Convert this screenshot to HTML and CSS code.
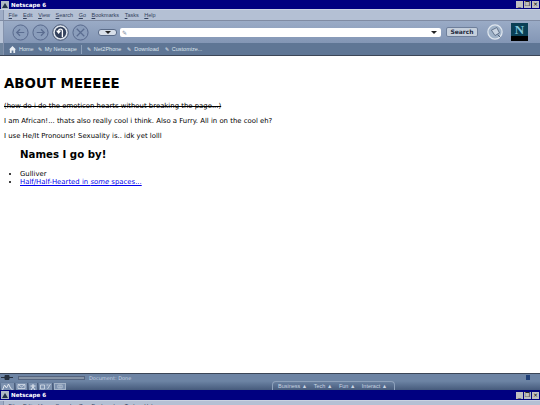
FILE: index.html
```html
<!DOCTYPE html>
<html lang="en">
  <head>
    <meta charset="UTF-8" />
    <title>Netscape 6</title>
    <link rel="stylesheet" href="styles.css">
  </head>
  <body>
    <div class="window">
      <div class="title-bar">
        <svg class="app-icon" viewBox="0 0 8 8"><rect width="8" height="8" fill="#aeb8c4"/><path d="M1 7 4 2l3 5z" fill="#203048"/></svg>
        <span class="title-text">Netscape 6</span>
        <div class="win-btns">
          <span class="win-btn">_</span>
          <span class="win-btn">&#10064;</span>
          <span class="win-btn">&times;</span>
        </div>
      </div>

      <div class="menu-bar">
        <span class="grip"></span>
        <span><u>F</u>ile</span>
        <span><u>E</u>dit</span>
        <span><u>V</u>iew</span>
        <span><u>S</u>earch</span>
        <span><u>G</u>o</span>
        <span><u>B</u>ookmarks</span>
        <span><u>T</u>asks</span>
        <span><u>H</u>elp</span>
      </div>

      <div class="nav-bar">
        <span class="grip"></span>
        <div class="nav-btns">
          <svg class="nav-btn" viewBox="0 0 18 18"><circle cx="9" cy="9" r="8" fill="#8a9dbb" stroke="#55668a"/><path d="M13 9H5M8.500 5.500 5 9l3.500 3.500" fill="none" stroke="#5a6c90" stroke-width="1.300"/></svg>
          <svg class="nav-btn" viewBox="0 0 18 18"><circle cx="9" cy="9" r="8" fill="#8a9dbb" stroke="#55668a"/><path d="M5 9h8M9.500 5.500 13 9l-3.500 3.500" fill="none" stroke="#5a6c90" stroke-width="1.300"/></svg>
          <svg class="nav-btn" viewBox="0 0 18 18"><circle cx="9" cy="9" r="8.200" fill="#dfe6ee" stroke="#3b4a68"/><circle cx="9" cy="9" r="6" fill="#33415c"/><path d="M11 14V7.500a2 2 0 0 0-4 0V9M5 7l2 2.500L9 7" fill="none" stroke="#fff" stroke-width="1.400"/></svg>
          <svg class="nav-btn" viewBox="0 0 18 18"><circle cx="9" cy="9" r="8" fill="#8a9dbb" stroke="#55668a"/><path d="m5 5 8 8M13 5l-8 8" stroke="#5a6c90" stroke-width="1.300"/></svg>
        </div>
        <div class="url-group">
          <span class="drop-pill"><i class="arrow"></i></span>
          <div class="url-box">
            <span class="bookmark-mark">&#9998;</span>
            <i class="arrow url-arrow"></i>
          </div>
          <span class="search-btn">Search</span>
        </div>
        <svg class="globe" viewBox="0 0 18 18"><circle cx="9" cy="9" r="8" fill="#9fb2c8" stroke="#dfe6ee" stroke-width="1.400"/><path d="M5 7l6-3 3 6-5 3z" fill="#c9d4e2" stroke="#45566f" stroke-width=".8"/><path d="m12 12 3 3" stroke="#45566f"/></svg>
        <div class="n-logo"><span>N</span></div>
      </div>

      <div class="personal-bar">
        <span class="grip"></span>
        <span class="link home"><svg class="home-icon" viewBox="0 0 8 8"><path d="M0 4 4 0l4 4H7v4H5V5H3v3H1V4z" fill="#e8edf3"/></svg>Home</span>
        <span class="link"><i class="tick">&#9998;</i>My Netscape</span>
        <span class="divider"></span>
        <span class="link"><i class="tick">&#9998;</i>Net2Phone</span>
        <span class="link"><i class="tick">&#9998;</i>Download</span>
        <span class="link"><i class="tick">&#9998;</i>Customize...</span>
      </div>

      <main class="content">
        <h1>ABOUT MEEEEE</h1>
        <p><s>(how do i do the emoticon hearts without breaking the page...)</s></p>
        <p>I am African!... thats also really cool i think. Also a Furry. All in on the cool eh?</p>
        <p>I use He/It Pronouns! Sexuality is.. idk yet lolll</p>
        <h2>Names I go by!</h2>
        <ul>
          <li>Gulliver</li>
          <li><a href="#">Half/Half-Hearted in <em>some</em> spaces...</a></li>
        </ul>
      </main>

      <div class="status-bar">
        <svg class="plug" viewBox="0 0 12 5"><path d="M0 2.500h12M4 .5h4v4H4z" stroke="#26303f" fill="#26303f"/></svg>
        <span class="progress"></span>
        <span class="status-text">Document: Done</span>
        <span class="lock"></span>
      </div>

      <div class="component-bar">
        <div class="tool-icons">
          <svg class="tool-icon wide" viewBox="0 0 12 7"><path d="M1 7 3 2l2 3 2-4 2 4 2 2" fill="none" stroke="#e2e8f0"/></svg>
          <svg class="tool-icon" viewBox="0 0 10 7"><path d="M1.500 1.500h7v4h-7zM1.500 1.500 5 4l3.500-2.500" fill="none" stroke="#d5dde8" stroke-width=".8"/></svg>
          <svg class="tool-icon narrow" viewBox="0 0 7 7"><path d="M3.500 1v3M1 3h5M3.500 4 1.500 7M3.500 4l2 3" fill="none" stroke="#e2e8f0"/></svg>
          <svg class="tool-icon wide" viewBox="0 0 12 7"><path d="M1 2h4v4H1zM8 6l3-5M7 2h2" fill="none" stroke="#d5dde8" stroke-width=".8"/></svg>
          <svg class="tool-icon boxed" viewBox="0 0 10 7"><path d="M2 1.500h6v4H2zM5 1.500v4" fill="none" stroke="#d5dde8" stroke-width=".8"/></svg>
        </div>
        <div class="tabs">
          <span>Business &#9650;</span>
          <span>Tech &#9650;</span>
          <span>Fun &#9650;</span>
          <span>Interact &#9650;</span>
        </div>
      </div>
    </div>

    <div class="window second">
      <div class="title-bar">
        <svg class="app-icon" viewBox="0 0 8 8"><rect width="8" height="8" fill="#aeb8c4"/><path d="M1 7 4 2l3 5z" fill="#203048"/></svg>
        <span class="title-text">Netscape 6</span>
        <div class="win-btns">
          <span class="win-btn">_</span>
          <span class="win-btn">&#10064;</span>
          <span class="win-btn">&times;</span>
        </div>
      </div>
      <div class="menu-bar">
        <span class="grip"></span>
        <span><u>F</u>ile</span>
        <span><u>E</u>dit</span>
        <span><u>V</u>iew</span>
        <span><u>S</u>earch</span>
        <span><u>G</u>o</span>
        <span><u>B</u>ookmarks</span>
        <span><u>T</u>asks</span>
        <span><u>H</u>elp</span>
      </div>
    </div>
  </body>
</html>
```

FILE: styles.css
```css
* {
  box-sizing: border-box;
}

html,
body {
  margin: 0;
  height: 405px;
  overflow: hidden;
}

body {
  font-family: "DejaVu Sans", sans-serif;
  font-size: 6px;
  background: #fff;
}

.window {
  height: 390px;
  display: flex;
  flex-direction: column;
}

.window.second {
  height: 15px;
}

.title-bar {
  height: 9px;
  flex: none;
  background: #000080;
  color: #fff;
  display: flex;
  align-items: center;
  padding: 0 1px;
  gap: 2px;
}

.second .title-bar {
  height: 10px;
}

.app-icon {
  width: 8px;
  height: 8px;
}

.title-text {
  font-weight: bold;
  font-size: 5.6px;
}

.win-btns {
  margin-left: auto;
  display: flex;
  gap: 1px;
}

.win-btn {
  width: 7px;
  height: 7px;
  background: #c0c0c0;
  color: #000;
  font-size: 6px;
  line-height: 6px;
  text-align: center;
  overflow: hidden;
}

.grip {
  width: 4px;
  align-self: stretch;
  flex: none;
  background: #a9b6cc;
  border-right: 1px solid #8593ad;
}

.menu-bar {
  height: 12px;
  flex: none;
  background: #b4c0d4;
  color: #33415c;
  display: flex;
  align-items: center;
  gap: 5.6px;
  font-family: "Liberation Sans", sans-serif;
  font-size: 5.5px;
  border-top: 1px solid #c8d2e2;
  border-bottom: 1px solid #7f8ba3;
}

.menu-bar .grip {
  margin-right: -1px;
  background: #9fadc6;
}

.nav-bar {
  height: 22px;
  flex: none;
  background: linear-gradient(#9aabc6, #8396b5);
  display: flex;
  align-items: center;
}

.nav-bar .grip {
  background: #b9c5d8;
}

.nav-btns {
  display: flex;
  gap: 3px;
  margin-left: 8px;
  margin-right: 9px;
}

.nav-btn {
  width: 17px;
  height: 17px;
}

.url-group {
  flex: 1;
  display: flex;
  align-items: center;
  gap: 3px;
  min-width: 0;
}

.drop-pill {
  width: 19px;
  height: 7px;
  border-radius: 3px;
  background: #d8dfe9;
  border: 1px solid #5a6b88;
  display: flex;
  align-items: center;
  justify-content: center;
}

.arrow {
  width: 0;
  height: 0;
  border-left: 3px solid transparent;
  border-right: 3px solid transparent;
  border-top: 3px solid #222;
}

.url-box {
  flex: 1;
  height: 9px;
  background: #fff;
  border-radius: 2px;
  display: flex;
  align-items: center;
  justify-content: space-between;
  padding: 0 4px 0 2px;
}

.bookmark-mark {
  color: #7d8aa0;
  font-size: 6px;
}

.search-btn {
  width: 32px;
  height: 10px;
  margin-left: 2px;
  background: #c5cfdc;
  border: 1px solid #6e7f9b;
  border-radius: 2px;
  color: #1f2a3d;
  font-weight: bold;
  font-size: 6px;
  line-height: 8px;
  text-align: center;
}

.globe {
  width: 16px;
  height: 16px;
  margin: 0 8px 0 9px;
}

.n-logo {
  width: 17px;
  height: 18px;
  margin-right: 12px;
  background: linear-gradient(#0a3f55 0 70%, #000 70%);
  color: #7fc4d8;
  font-family: "Liberation Serif", serif;
  font-weight: bold;
  font-size: 13px;
  line-height: 14px;
  text-align: center;
}

.personal-bar {
  height: 13px;
  flex: none;
  background: #5f7695;
  color: #dbe3ec;
  display: flex;
  align-items: center;
  border-bottom: 1px solid #3c4657;
  font-family: "Liberation Sans", sans-serif;
  font-size: 5.5px;
}

.personal-bar .grip {
  background: #71869f;
  margin-right: 5px;
}

.link {
  display: flex;
  align-items: center;
  gap: 3px;
  margin-right: 6px;
}

.home {
  margin-right: 4px;
}

.home-icon {
  width: 7px;
  height: 7px;
}

.tick {
  font-style: normal;
  font-size: 5px;
  color: #e8edf3;
}

.divider {
  width: 1px;
  height: 9px;
  background: #8ea1ba;
  margin: 0 5px 0 -2px;
}

.content {
  flex: 1;
  min-height: 0;
  background: #fff;
  color: #000;
  padding: 0 4px;
  font-size: 6.9px;
  line-height: 8px;
}

.content h1 {
  font-size: 13.4px;
  line-height: 16px;
  margin: 20px 0 0;
}

.content p {
  margin: 7px 0 0;
}

.content h1 + p {
  margin-top: 10px;
}

.content h2 {
  font-size: 10.2px;
  line-height: 13px;
  margin: 8px 0 0 16px;
}

.content ul {
  margin: 9px 0 0;
  padding-left: 16px;
}

.content a {
  color: #0000ee;
}

.status-bar {
  height: 8px;
  flex: none;
  background: #6d84a4;
  border-top: 1px solid #3c4657;
  display: flex;
  align-items: center;
  color: #c9d4e2;
  font-size: 5px;
  padding-left: 1px;
}

.plug {
  width: 12px;
  height: 5px;
  margin-right: 5px;
}

.progress {
  width: 67px;
  height: 4px;
  background: #8794a6;
  border: 1px solid #556580;
  margin-right: 4px;
}

.lock {
  width: 4px;
  height: 5px;
  background: #1f3f77;
  margin-left: auto;
  margin-right: 10px;
}

.component-bar {
  height: 9px;
  flex: none;
  background: linear-gradient(#6d84a4, #465b7c);
  display: flex;
  align-items: flex-end;
  color: #c9d4e2;
  font-family: "Liberation Sans", sans-serif;
  font-size: 5.5px;
}

.tool-icons {
  display: flex;
  gap: 1px;
  padding-left: 1px;
  width: 272px;
}

.tool-icon {
  width: 12px;
  height: 7px;
  background: #7c91af;
  border-right: 1px solid #4c5f7e;
}

.tool-icon.narrow {
  width: 9px;
}

.tool-icon.wide {
  width: 14px;
}

.tool-icon.boxed {
  border: 1px solid #a3b3c8;
}

.tabs {
  width: 123px;
  height: 9px;
  border: 1px solid #8ea1bb;
  border-bottom: none;
  border-radius: 4px 4px 0 0;
  display: flex;
  align-items: center;
  gap: 6.5px;
  padding-left: 5px;
  white-space: nowrap;
}
```
